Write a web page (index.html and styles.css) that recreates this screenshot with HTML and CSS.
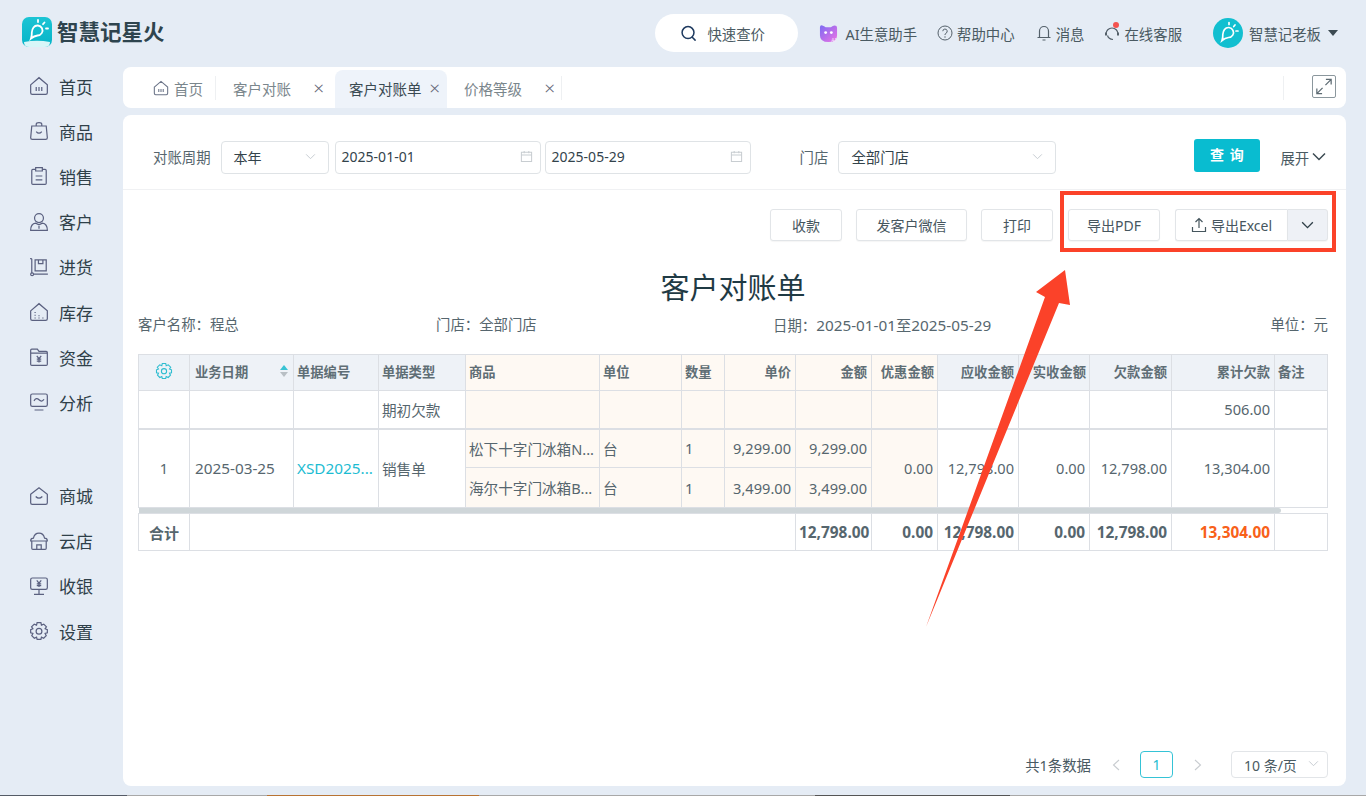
FILE: index.html
```html
<!DOCTYPE html>
<html lang="zh-CN">
<head>
<meta charset="utf-8">
<title>智慧记星火 - 客户对账单</title>
<link rel="stylesheet" href="styles.css">
</head>
<body>
<div class="app">
  <header class="topbar">
    <div class="brand">
      <svg class="brand-logo" viewBox="0 0 30 30"><defs><linearGradient id="lg" x1="0" y1="0" x2="0" y2="1"><stop offset="0" stop-color="#1cc4d4"/><stop offset="1" stop-color="#06b4c8"/></linearGradient></defs><rect width="30" height="30" rx="7" fill="url(#lg)"/><path d="M2 25Q15 22.500 28 25 28 30 23 30H7Q2 30 2 25Z" fill="#d8f6f8"/><g fill="none" stroke="#fff" stroke-width="1.800" stroke-linecap="round"><path d="M11.500 10.500A5 5 0 1 1 15.500 18.500Q12 19 9 21.500Q10 18.500 9.800 15.500Q10 12.500 11.500 10.500Z"/><path d="M16 3V5M22.500 5.500L21 7.200M26 11.500H24"/></g></svg>
      <span class="brand-name">智慧记星火</span>
    </div>
    <div class="top-right">
      <div class="quick-search">
        <svg class="ico-search" viewBox="0 0 18 18"><circle cx="8.500" cy="8" r="6.300" fill="none" stroke="#1e3a5f" stroke-width="1.600"/><path d="M13 13l3 3" stroke="#1e3a5f" stroke-width="1.600" stroke-linecap="round"/></svg>
        <span>快速查价</span>
      </div>
      <div class="top-item ai">
        <svg class="ico-ai" viewBox="0 0 20 20"><defs><linearGradient id="ag" x1="0" y1="0" x2="1" y2="1"><stop offset="0" stop-color="#7c6bf2"/><stop offset="1" stop-color="#ee72e4"/></linearGradient></defs><path d="M1 3.500Q1 1 3.500 1.500Q5.500 2 7 3.500H12.500Q14.500 1.500 16.500 1.500Q19 1.500 19 4V12Q19 19 10 19Q1 19 1 12Z" fill="url(#ag)"/><circle cx="7" cy="9" r="1.500" fill="#fff"/><circle cx="13" cy="9" r="1.500" fill="#fff"/><text class="ai-mark" x="13" y="19">AI</text></svg>
        <span>AI生意助手</span>
      </div>
      <div class="top-item help">
        <svg class="ico-top" viewBox="0 0 16 16"><circle cx="8" cy="8" r="7" fill="none" stroke="#54606a" stroke-width="1"/><path d="M5.800 6.200A2.200 2.200 0 1 1 8.800 8.300Q8 8.700 8 10" fill="none" stroke="#54606a"/><circle cx="8" cy="12" r=".7" fill="#54606a"/></svg>
        <span>帮助中心</span>
      </div>
      <div class="top-item msg">
        <svg class="ico-top" viewBox="0 0 16 16"><path d="M3.500 12.500V6A4.500 4.500 0 0 1 12.500 6V12.500M1.500 12.500H14.500M6.500 15H9.500" fill="none" stroke="#54606a" stroke-width="1.200"/></svg>
        <span>消息</span>
      </div>
      <div class="top-item service">
        <span class="badge-wrap">
          <svg class="ico-top" viewBox="0 0 16 16"><path d="M2 9A6 6 0 1 1 14 9" fill="none" stroke="#54606a" stroke-width="1.200"/><path d="M1 7.500H3V10.500H1ZM13 7.500H15V10.500H13Z" fill="#54606a"/><path d="M3.500 10.500Q4.500 14 9 14.500" fill="none" stroke="#54606a" stroke-width="1.200"/></svg>
          <i class="dot"></i>
        </span>
        <span>在线客服</span>
      </div>
      <div class="user">
        <svg class="avatar" viewBox="0 0 30 30"><circle cx="15" cy="15" r="15" fill="#12bfd0"/><g fill="none" stroke="#fff" stroke-width="1.700" stroke-linecap="round"><path d="M11.500 11.500A5 5 0 1 1 15.500 19.500Q12 20 9 22.500Q10 19.500 9.800 16.500Q10 13.500 11.500 11.500Z"/><path d="M16 4.500V6.500M22 7L20.700 8.500M25 13H23"/></g></svg>
        <span>智慧记老板</span>
        <i class="caret"></i>
      </div>
    </div>
  </header>

  <div class="body-row">
    <nav class="sidebar">
      <ul class="menu">
        <li><svg class="nav-ico" viewBox="0 0 18 18"><path d="M1.500 8L9 1.500 16.500 8V15Q16.500 16.500 15 16.500H3Q1.500 16.500 1.500 15Z M6.500 10V13.500M9 10V13.500M11.500 10V13.500"/></svg>首页</li>
        <li><svg class="nav-ico" viewBox="0 0 18 18"><path d="M2.500 4.500H15.500L16.500 15Q16.500 16.500 15 16.500H3Q1.500 16.500 1.500 15Z M6.500 4.500V3Q6.500 1.500 9 1.500T11.500 3V4.500M6.500 9.500Q9 12.500 11.500 9.500"/></svg>商品</li>
        <li><svg class="nav-ico" viewBox="0 0 18 18"><path d="M6 3H3.500Q2.500 3 2.500 4V15.500Q2.500 16.500 3.500 16.500H14.500Q15.500 16.500 15.500 15.500V4Q15.500 3 14.500 3H12M6 1.500H12V4.500H6Z M6 9H12M6 12.500H12"/></svg>销售</li>
        <li><svg class="nav-ico" viewBox="0 0 18 18"><circle cx="9" cy="5.500" r="4"/><path d="M1.500 16.500Q1.500 10.500 6 10L9 11.500 12 10Q16.500 10.500 16.500 16.500ZM9 12.500V15"/></svg>客户</li>
        <li><svg class="nav-ico" viewBox="0 0 18 18"><path d="M2.500 1.500V14.500M1 1.500H2.500M4 15.500H17M5.500 2.500H15.500V12.500H5.500ZM8.500 2.500V6H12.500V2.500"/><circle cx="2.800" cy="15.500" r="1.300"/></svg>进货</li>
        <li><svg class="nav-ico" viewBox="0 0 18 18"><path d="M1.500 8L9 1.500 16.500 8V15Q16.500 16.500 15 16.500H3Q1.500 16.500 1.500 15Z M5.500 9V9.800M5.500 11.500V12.300M5.500 14V14.800M9 12V12.800M9 14V14.800M12.500 14V14.800"/></svg>库存</li>
        <li><svg class="nav-ico" viewBox="0 0 18 18"><path d="M1.500 5.500V3Q1.500 2 2.500 2H7.500L9 4H15.500Q16.500 4 16.500 5V15.500Q16.500 16.500 15.500 16.500H2.500Q1.500 16.500 1.500 15.500V5.500H16.500M7 8L9 10.500 11 8M9 10.500V14M7 11H11M7 12.800H11"/></svg>资金</li>
        <li><svg class="nav-ico" viewBox="0 0 18 18"><path d="M3 1.800H15Q16.500 1.800 16.500 3.300V11.500Q16.500 13 15 13H3Q1.500 13 1.500 11.500V3.300Q1.500 1.800 3 1.800ZM5 16.200H13M4.500 8Q6.500 4.500 9 7T13.500 6.500"/></svg>分析</li>
      </ul>
      <ul class="menu menu-second">
        <li><svg class="nav-ico" viewBox="0 0 18 18"><path d="M1.500 7.500L9 1.500 16.500 7.500V15Q16.500 16.500 15 16.500H3Q1.500 16.500 1.500 15Z M6 9.500Q9 12.500 12 9.500"/></svg>商城</li>
        <li><svg class="nav-ico" viewBox="0 0 18 18"><path d="M1.500 9Q1.500 6.500 4 6.500 5 2 9 2T14 6.500Q16.500 6.500 16.500 9ZM2.500 9V15.500Q2.500 16.500 3.500 16.500H14.500Q15.500 16.500 15.500 15.500V9M7 16.500V12.500H11V16.500M1.500 9H16.500"/></svg>云店</li>
        <li><svg class="nav-ico" viewBox="0 0 18 18"><path d="M3 1.800H15Q16.500 1.800 16.500 3.300V10.500Q16.500 12 15 12H3Q1.500 12 1.500 10.500V3.300Q1.500 1.800 3 1.800ZM9 12V16M4.500 16.500H13.500M7 4L9 6.500 11 4M9 6.500V10M7 7H11M7 8.700H11"/></svg>收银</li>
        <li><svg class="nav-ico" viewBox="0 0 18 18"><path d="M7.300 1.500H10.700L11.200 3.700 13.300 2.800 15.700 5.200 14.500 7 16.500 7.800V10.700L14.500 11.200 15.500 13.200 13.200 15.500 11.200 14.500 10.700 16.500H7.300L6.800 14.500 4.800 15.500 2.500 13.200 3.500 11.200 1.500 10.700V7.800L3.500 7 2.300 5.200 4.700 2.800 6.800 3.700Z"/><circle cx="9" cy="9.200" r="2.600"/></svg>设置</li>
      </ul>
    </nav>

    <main class="content">
      <div class="tabs">
        <div class="tab tab-home">
          <svg class="tab-ico" viewBox="0 0 18 18"><path d="M1.500 8L9 1.500 16.500 8V15Q16.500 16.500 15 16.500H3Q1.500 16.500 1.500 15Z M6.500 10V13.500M9 10V13.500M11.500 10V13.500"/></svg>
          <span>首页</span>
        </div>
        <div class="tab tab-c1"><span>客户对账</span><i class="close">×</i></div>
        <div class="tab tab-active"><span>客户对账单</span><i class="close">×</i></div>
        <div class="tab tab-c3"><span>价格等级</span><i class="close">×</i></div>
        <div class="tabs-tail">
          <button class="expand-btn" type="button" aria-label="全屏"><svg viewBox="0 0 22 22"><path d="M13 3.500H18.500V9M18.500 3.500L12.500 9.500M9 18.500H3.500V13M3.500 18.500L9.500 12.500" fill="none" stroke="#5c6a72" stroke-width="1.300"/></svg></button>
        </div>
      </div>

      <section class="card">
        <form class="filter">
          <label class="f-label">对账周期</label>
          <div class="field f-period"><span>本年</span><svg class="chev" viewBox="0 0 12 8"><path d="M1 1.500L6 6.500 11 1.500"/></svg></div>
          <div class="field f-date"><span>2025-01-01</span><svg class="cal" viewBox="0 0 14 14"><path d="M1.500 2.500H12.500V12.500H1.500ZM1.500 5.500H12.500M4.500 1V3.500M9.500 1V3.500"/></svg></div>
          <div class="field f-date f-date2"><span>2025-05-29</span><svg class="cal" viewBox="0 0 14 14"><path d="M1.500 2.500H12.500V12.500H1.500ZM1.500 5.500H12.500M4.500 1V3.500M9.500 1V3.500"/></svg></div>
          <label class="f-label f-store-label">门店</label>
          <div class="field f-store"><span>全部门店</span><svg class="chev" viewBox="0 0 12 8"><path d="M1 1.500L6 6.500 11 1.500"/></svg></div>
          <button class="query" type="button">查 询</button>
          <span class="more">展开<svg class="more-chev" viewBox="0 0 14 9"><path d="M1 1.500L7 7.500 13 1.500"/></svg></span>
        </form>

        <div class="actions">
          <button class="btn btn-pay" type="button">收款</button>
          <button class="btn btn-wx" type="button">发客户微信</button>
          <button class="btn btn-print" type="button">打印</button>
          <button class="btn btn-pdf" type="button">导出PDF</button>
          <div class="btn-group">
            <button class="btn btn-excel" type="button"><svg class="upload" viewBox="0 0 16 16"><path d="M8 11V1.800M4.500 5L8 1.500 11.500 5M1.500 10V14.500H14.500V10"/></svg>导出Excel</button>
            <button class="btn btn-drop" type="button" aria-label="更多"><svg viewBox="0 0 14 9"><path d="M1 1.500L7 7.500 13 1.500"/></svg></button>
          </div>
        </div>

        <h1 class="doc-title">客户对账单</h1>
        <div class="doc-info">
          <span>客户名称：程总</span>
          <span>门店：全部门店</span>
          <span>日期：<span class="doc-range">2025-01-01至2025-05-29</span></span>
          <span>单位：元</span>
        </div>

        <table class="grid">
          <colgroup>
            <col class="w51"><col class="w104"><col class="w85"><col class="w87"><col class="w134"><col class="w82"><col class="w43"><col class="w71"><col class="w76"><col class="w66"><col class="w81"><col class="w71"><col class="w82"><col class="w103"><col class="w53">
          </colgroup>
          <thead>
            <tr>
              <th class="c"><svg class="gear" viewBox="0 0 18 18"><path d="M7.300 1.500H10.700L11.200 3.700 13.300 2.800 15.700 5.200 14.500 7 16.500 7.800V10.700L14.500 11.200 15.500 13.200 13.200 15.500 11.200 14.500 10.700 16.500H7.300L6.800 14.500 4.800 15.500 2.500 13.200 3.500 11.200 1.500 10.700V7.800L3.500 7 2.300 5.200 4.700 2.800 6.800 3.700Z"/><circle cx="9" cy="9.200" r="2.600"/></svg></th>
              <th class="sortable">业务日期<span class="sort"><i class="up"></i><i class="down"></i></span></th>
              <th>单据编号</th>
              <th>单据类型</th>
              <th class="w">商品</th>
              <th class="w">单位</th>
              <th class="w">数量</th>
              <th class="w r">单价</th>
              <th class="w r">金额</th>
              <th class="w r tight">优惠金额</th>
              <th class="r">应收金额</th>
              <th class="r tight">实收金额</th>
              <th class="r">欠款金额</th>
              <th class="r">累计欠款</th>
              <th>备注</th>
            </tr>
          </thead>
          <tbody>
            <tr class="row-a">
              <td></td><td></td><td></td><td>期初欠款</td>
              <td class="w"></td><td class="w"></td><td class="w"></td><td class="w"></td><td class="w"></td><td class="w"></td>
              <td></td><td></td><td></td><td class="r">506.00</td><td></td>
            </tr>
            <tr class="row-b">
              <td class="c" rowspan="2">1</td>
              <td rowspan="2" class="wide date-cell">2025-03-25</td>
              <td rowspan="2" class="wide"><a class="link" href="#">XSD2025...</a></td>
              <td rowspan="2">销售单</td>
              <td class="w">松下十字门冰箱N...</td>
              <td class="w">台</td><td class="w">1</td>
              <td class="w r">9,299.00</td><td class="w r">9,299.00</td>
              <td class="w r" rowspan="2">0.00</td>
              <td class="r" rowspan="2">12,798.00</td>
              <td class="r" rowspan="2">0.00</td>
              <td class="r" rowspan="2">12,798.00</td>
              <td class="r" rowspan="2">13,304.00</td>
              <td rowspan="2"></td>
            </tr>
            <tr class="row-c">
              <td class="w">海尔十字门冰箱B...</td>
              <td class="w">台</td><td class="w">1</td>
              <td class="w r">3,499.00</td><td class="w r">3,499.00</td>
            </tr>
            <tr class="row-scroll"><td colspan="15"><div class="thumb"></div></td></tr>
          </tbody>
          <tfoot>
            <tr>
              <td class="c total-label">合计</td>
              <td colspan="7"></td>
              <td class="r">12,798.00</td><td class="r">0.00</td><td class="r">12,798.00</td><td class="r">0.00</td><td class="r">12,798.00</td>
              <td class="r debt">13,304.00</td><td></td>
            </tr>
          </tfoot>
        </table>

        <div class="pager">
          <span class="pager-total">共1条数据</span>
          <svg class="pg-arrow" viewBox="0 0 8 12"><path d="M7 1L1.500 6 7 11"/></svg>
          <span class="pg-num">1</span>
          <svg class="pg-arrow" viewBox="0 0 8 12"><path d="M1 1L6.500 6 1 11"/></svg>
          <div class="pg-size"><span>10 条/页</span><svg class="chev" viewBox="0 0 12 8"><path d="M1 1.500L6 6.500 11 1.500"/></svg></div>
        </div>
      </section>
    </main>
  </div>

  <div class="bottom-strip"></div>

  <svg class="annotation" viewBox="0 0 1366 796">
    <rect x="1062" y="193" width="272" height="57" fill="none" stroke="#fb4229" stroke-width="4"/>
    <polygon points="1065,270 1070,305 1059,303 926,627 1045,297 1036,292" fill="#fb4229"/>
  </svg>
</div>
</body>
</html>
```

FILE: styles.css
```css
* { box-sizing: border-box; }
html, body { margin: 0; padding: 0; }
body {
  font-family: "Noto Sans", "Noto Sans CJK SC", sans-serif;
  font-size: 14.400px;
  color: #4a5a62;
  background: #e4ebf5;
  overflow: hidden;
}
ul { list-style: none; margin: 0; padding: 0; }
i { font-style: normal; }
button { font-family: inherit; cursor: pointer; }

.app { position: relative; width: 1366px; height: 796px; overflow: hidden; background: #e5ecf5; }

/* top bar */
.topbar { height: 65px; display: flex; align-items: center; justify-content: space-between; padding: 2px 28px 2px 22px; }
.brand { display: flex; align-items: center; gap: 5px; margin-top: -1px; }
.brand-logo { width: 30px; height: 30px; display: block; }
.brand-name { font-size: 21.500px; font-weight: 700; color: #2e444e; line-height: 30px; }
.top-right { display: flex; align-items: center; color: #4a5a62; font-size: 14.400px; margin-top: 1px; }
.quick-search { width: 143px; height: 38px; border-radius: 19px; background: #fff; display: flex; align-items: center; padding-left: 25px; gap: 10px; margin-right: 21px; }
.ico-search { width: 17px; height: 17px; }
.top-item { display: flex; align-items: center; gap: 4px; white-space: nowrap; }
.ai { gap: 7px; margin-right: 20px; }
.ico-ai { width: 19px; height: 19px; overflow: visible; }
.ai-mark { font-size: 5.500px; fill: #f3e6ff; font-family: "Noto Sans", sans-serif; }
.help { margin-right: 21px; }
.msg { margin-right: 20px; }
.service { margin-right: 31px; }
.ico-top { width: 16px; height: 16px; display: block; }
.badge-wrap { position: relative; display: block; }
.dot { position: absolute; top: -3px; right: 1px; width: 6px; height: 6px; border-radius: 50%; background: #f4534f; }
.user { display: flex; align-items: center; gap: 6px; }
.avatar { width: 30px; height: 30px; }
.caret { width: 0; height: 0; border-left: 5px solid transparent; border-right: 5px solid transparent; border-top: 6px solid #3c4a52; margin-left: 1px; }

.body-row { display: flex; height: 721px; }

/* sidebar */
.sidebar { width: 123px; flex: none; margin-top: -1.500px; }
.menu li { height: 45.200px; display: flex; align-items: center; gap: 10px; padding-left: 29px; font-size: 17px; color: #2f4049; }
.menu-second { margin-top: 48px; }
.nav-ico { width: 20px; height: 20px; fill: none; stroke: #5b6180; stroke-width: 1.100; flex: none; }

/* tabs */
.content { width: 1223px; flex: none; padding-top: 2px; }
.tabs { height: 41px; background: #fff; border-radius: 8px; display: flex; align-items: center; padding-left: 17px; color: #7a868c; font-size: 14.500px; }
.tab { height: 35px; display: flex; align-items: center; white-space: nowrap; margin-top: 1px; }
.tab-home { width: 76px; padding-left: 13px; gap: 5px; border-right: 1px solid #eef0f2; height: 24px; }
.tab-ico { width: 16px; height: 16px; fill: none; stroke: #6b7488; stroke-width: 1.200; }
.tab-c1 { width: 119px; padding-left: 17px; justify-content: space-between; padding-right: 11px; }
.tab-active { width: 112px; padding: 0 7px 2px 14px; justify-content: space-between; background: #eef3fa; color: #3a4a52; border-radius: 8px 8px 0 0; height: 38px; margin-top: 3px; }
.tab-c3 { width: 115px; padding-left: 17px; padding-right: 6px; justify-content: space-between; border-right: 1px solid #eef0f2; height: 24px; }
.close { font-size: 19px; font-weight: 300; color: #667; line-height: 1; }
.tabs-tail { margin-left: auto; margin-right: 10px; height: 24px; border-left: 1px solid #eef0f2; padding-left: 28px; display: flex; align-items: center; }
.expand-btn { width: 24px; height: 23px; padding: 0; background: #fff; border: 1px solid #8b979d; border-radius: 2px; display: flex; margin-bottom: 3px; }
.expand-btn svg { width: 22px; height: 21px; }

/* main card */
.card { margin-top: 7px; height: 671px; background: #fff; border-radius: 8px; display: flex; flex-direction: column; }
.filter { height: 75px; display: flex; align-items: center; border-bottom: 1px solid #f0f1f3; padding: 11px 0 0 30px; margin: 0; color: #56666e; }
.f-label { white-space: nowrap; margin-top: -2px; margin-right: 10px; }
.field { height: 33px; border: 1px solid #dfe3e6; border-radius: 4px; display: flex; align-items: center; justify-content: space-between; color: #33434b; font-size: 14px; padding-bottom: 2px; }
.f-period { width: 108px; padding: 0 12px 2px; margin-right: 6px; }
.f-date { width: 206px; padding: 0 7px 2px 6px; margin-right: 4px; }
.f-date2 { width: 206px; margin-left: 0; margin-right: 49px; }
.f-store-label { margin-right: 10px; }
.f-store { width: 218px; padding: 0 12px 2px; font-size: 14.400px; }
.chev { width: 11px; height: 7px; fill: none; stroke: #c5cbd0; stroke-width: 1.100; }
.cal { width: 13px; height: 13px; fill: none; stroke: #c8cdd1; stroke-width: 1.100; }
.query { width: 66px; height: 33px; margin-left: 138px; margin-top: -4px; padding: 0 0 3px; border: 0; border-radius: 3px; background: #09bcd0; color: #fff; font-size: 14px; font-weight: 700; letter-spacing: 1px; }
.more { margin-left: 20px; display: flex; align-items: center; gap: 3px; color: #4a5a62; }
.more-chev { width: 14px; height: 9px; fill: none; stroke: #3c4a52; stroke-width: 1.500; margin-top: -3px; }

.actions { display: flex; justify-content: flex-end; align-items: center; padding: 19px 18px 0 0; }
.btn { height: 32px; background: #fff; border: 1px solid #e2e5e8; border-radius: 3px; color: #46565e; font-size: 14px; padding: 0; display: flex; align-items: center; justify-content: center; box-shadow: 0 1px 1px rgba(0,0,0,.04); }
.btn-pay { width: 72px; margin-right: 14px; }
.btn-wx { width: 111px; margin-right: 14px; }
.btn-print { width: 72px; margin-right: 15px; }
.btn-pdf { width: 92px; margin-right: 15px; }
.btn-group { display: flex; }
.btn-excel { width: 112px; gap: 4px; border-radius: 3px 0 0 3px; border-right: 0; }
.upload { width: 16px; height: 16px; fill: none; stroke: #46565e; stroke-width: 1.200; }
.btn-drop { width: 41px; background: #eef1f6; border-radius: 0 3px 3px 0; }
.btn-drop svg { width: 13px; height: 8px; fill: none; stroke: #2f3f48; stroke-width: 1.500; }

.doc-title { margin: 24px 0 0; text-align: center; font-size: 29px; font-weight: 400; line-height: 46px; color: #1f3a44; padding-right: 3px; }
.doc-info { display: grid; grid-template-columns: 298px 337px 1fr auto; margin: 2px 18px 0 15px; line-height: 24px; color: #56666e; }
.doc-range { font-size: 15.300px; }

/* table */
.grid { table-layout: fixed; border-collapse: collapse; width: 1189px; margin: 16px 0 0 15px; font-size: 14.600px; color: #56666e; }
.w51 { width: 51px; } .w104 { width: 104px; } .w85 { width: 85px; } .w87 { width: 87px; } .w134 { width: 134px; } .w82 { width: 82px; } .w43 { width: 43px; } .w71 { width: 71px; } .w76 { width: 76px; } .w66 { width: 66px; } .w81 { width: 81px; } .w103 { width: 103px; } .w53 { width: 53px; }
.grid th, .grid td { border: 1px solid #dcdfe4; padding: 0 3px; white-space: nowrap; overflow: hidden; text-align: left; font-weight: 400; }
.grid th { height: 36px; background: #eef2f7; font-size: 13.300px; font-weight: 700; color: #5f6e75; padding-bottom: 3px; }
.grid .w { background: #fef9f3; }
.grid .r { text-align: right; }
.grid .c { text-align: center; }
.grid .wide { font-size: 15.300px; }
.grid .date-cell { padding-left: 5px; }
.grid th.r, .grid td.r { padding-right: 4px; }
.grid th.tight { padding-right: 3px; }
.row-a td { height: 38px; border-bottom-width: 2px; }
.row-b td { height: 39px; }
.row-c td { height: 40px; }
.grid .sortable { position: relative; padding-left: 5px; }
.sort { position: absolute; right: 5px; top: 10px; display: flex; flex-direction: column; gap: 2px; }
.sort .up { border-left: 4px solid transparent; border-right: 4px solid transparent; border-bottom: 5px solid #38c3d4; }
.sort .down { border-left: 4px solid transparent; border-right: 4px solid transparent; border-top: 5px solid #b8bfc4; }
.gear { width: 18px; height: 18px; fill: none; stroke: #2fbdd0; stroke-width: 1.100; display: block; margin: 0 auto; }
.link { color: #1cbcd2; text-decoration: none; }
.grid .row-scroll td { height: 5px; padding: 0; border: 0; border-bottom: 1px solid #dcdfe4; background: #fff; line-height: 0; }
.thumb { height: 5px; width: 1142px; background: #cfd6d9; border-radius: 0 3px 3px 0; }
.grid tfoot td { height: 37px; font-weight: 700; font-size: 15.400px; color: #56666e; }
.grid .total-label { font-size: 15px; }
.grid .debt { color: #f8611a; }

/* pager */
.pager { margin-top: auto; margin-bottom: 8px; display: flex; align-items: center; justify-content: flex-end; padding-right: 18px; color: #4a5a62; height: 27px; font-size: 14px; }
.pager-total { margin-right: 21px; font-size: 14.400px; }
.pg-arrow { width: 8px; height: 12px; fill: none; stroke: #c8ccd0; stroke-width: 1.100; }
.pg-num { width: 33px; height: 27px; border: 1px solid #35c3d6; border-radius: 4px; color: #23bcd0; display: flex; align-items: center; justify-content: center; margin: 0 21px 0 20px; }
.pg-size { width: 97px; height: 27px; margin-left: 29px; border: 1px solid #e2e5e8; border-radius: 4px; padding: 0 8px 0 12px; display: flex; align-items: center; justify-content: space-between; }
.pg-size .chev { margin-top: -3px; }

/* bottom edge of the screenshot */
.bottom-strip { position: absolute; left: 0; right: 0; bottom: 0; height: 1px; background: linear-gradient(90deg, #555b66 0 127px, #a8a8a8 127px 267px, #b87333 267px 479px, #a8a8a8 479px 815px, #555 815px 1010px, #a8a8a8 1010px); }

/* red annotation over the page */
.annotation { position: absolute; left: 0; top: 0; width: 1366px; height: 796px; pointer-events: none; }
```
